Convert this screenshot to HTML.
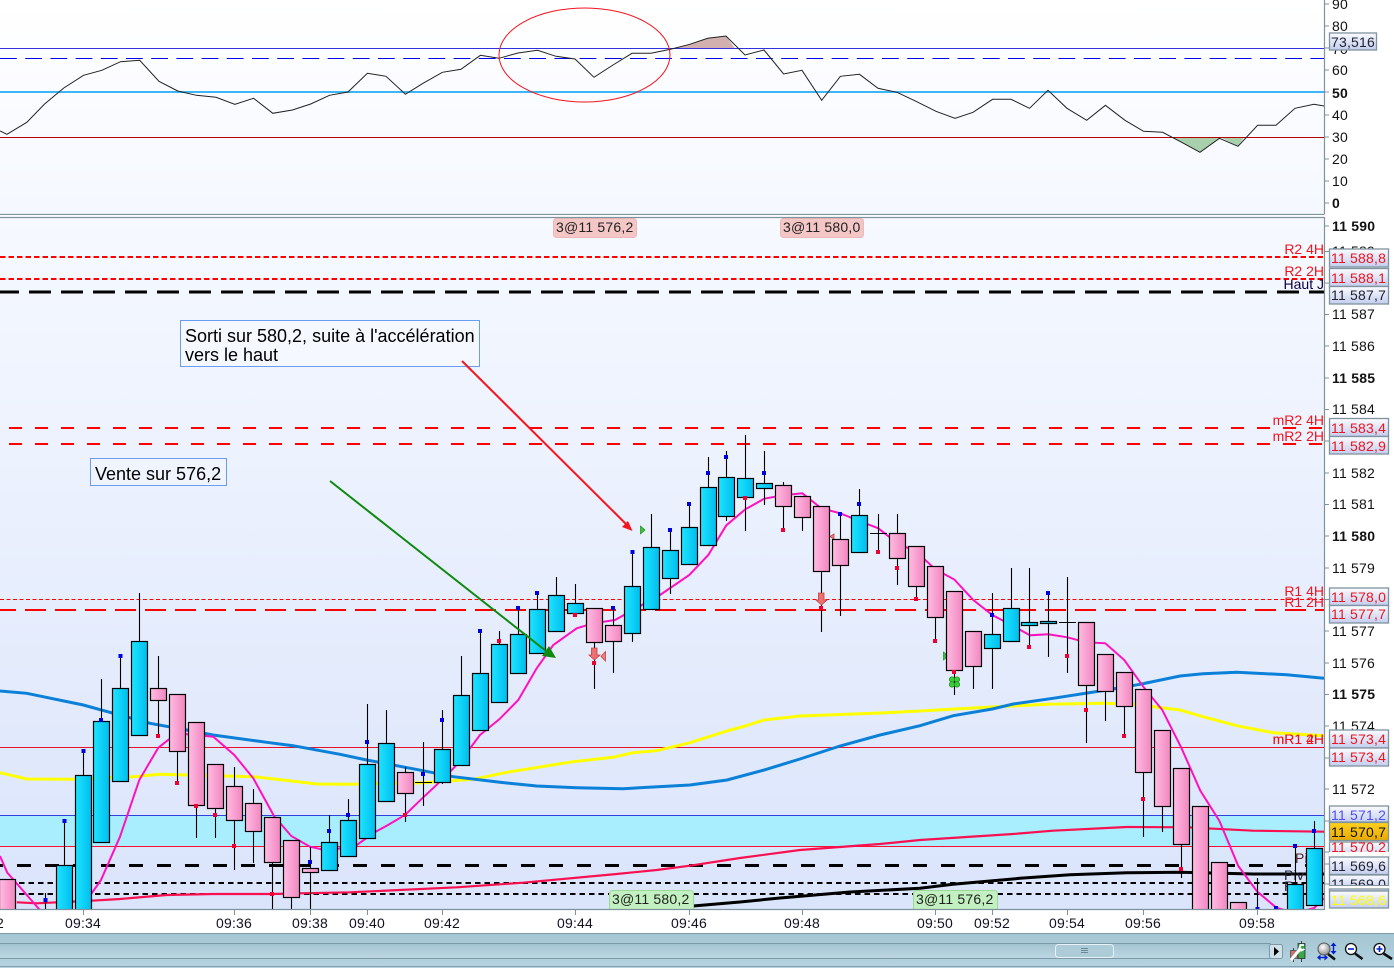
<!DOCTYPE html>
<html><head><meta charset="utf-8"><style>
html,body{margin:0;padding:0;background:#fff;width:1394px;height:968px;overflow:hidden}
svg{display:block;font-family:"Liberation Sans",sans-serif;font-size:14px;letter-spacing:.2px}
.b{fill:url(#gb);stroke:#000;stroke-width:1.2}
.p{fill:url(#gp);stroke:#000;stroke-width:1.2}
.vb{fill:url(#gv);stroke:#7f939f;stroke-width:1.3}
.m{fill:#f00}
.bd{fill:#0000dd}.rd{fill:#f00030}
.tl{fill:#111}
.r{fill:#f0141e;text-anchor:end;letter-spacing:0}
.ax{fill:#111}
.an{letter-spacing:0;font-size:18px;fill:#000}
</style></head><body>
<svg width="1394" height="968" viewBox="0 0 1394 968" xmlns="http://www.w3.org/2000/svg">
<defs>
<linearGradient id="g1" x1="0" y1="0" x2="0" y2="1"><stop offset="0" stop-color="#fff"/><stop offset="1" stop-color="#f5f8ff"/></linearGradient>
<linearGradient id="g2" x1="0" y1="0" x2="0" y2="1"><stop offset="0" stop-color="#f6f9ff"/><stop offset="1" stop-color="#dae4fb"/></linearGradient>
<linearGradient id="gb" x1="0" y1="0" x2="1" y2="0"><stop offset="0" stop-color="#1ee4ff"/><stop offset="1" stop-color="#00bdee"/></linearGradient>
<linearGradient id="gp" x1="0" y1="0" x2="1" y2="0"><stop offset="0" stop-color="#ffbce2"/><stop offset="1" stop-color="#f286c0"/></linearGradient>
<linearGradient id="gv" x1="0" y1="0" x2="0" y2="1"><stop offset="0" stop-color="#fbfcff"/><stop offset="1" stop-color="#c3cdee"/></linearGradient>
<linearGradient id="gy" x1="0" y1="0" x2="0" y2="1"><stop offset="0" stop-color="#ffd21e"/><stop offset="1" stop-color="#e8a800"/></linearGradient>
<linearGradient id="gt" x1="0" y1="0" x2="0" y2="1"><stop offset="0" stop-color="#a6c6d4"/><stop offset="1" stop-color="#b4d2df"/></linearGradient>
<linearGradient id="gs" x1="0" y1="0" x2="0" y2="1"><stop offset="0" stop-color="#a3c2d0"/><stop offset="1" stop-color="#bcd8e4"/></linearGradient>
<radialGradient id="gm" cx=".4" cy=".35" r=".7"><stop offset="0" stop-color="#fff"/><stop offset="1" stop-color="#8a8a8a"/></radialGradient>
<clipPath id="cm"><rect x="0" y="218" width="1324" height="691"/></clipPath>
</defs>

<!-- RSI panel -->
<rect x="0" y="0" width="1324" height="214" fill="url(#g1)"/>
<polygon points="670.5,48.5 689.7,44.3 707.7,38.3 726,36 735,48.5" fill="#d2b0b0"/>
<polygon points="1172,137.5 1181.7,142.3 1200,152.3 1219,138 1217,137.5" fill="#a8d0ac"/>
<polygon points="1221,137.5 1238,146.3 1244,137.5" fill="#a8d0ac"/>
<path d="M0 48.5H1324" stroke="#3030e0" stroke-width="1" fill="none"/>
<path d="M0 58.5H1324" stroke="#0000f0" stroke-width="1" stroke-dasharray="16.8 8.4" fill="none"/>
<path d="M0 92H1324" stroke="#3cb6f6" stroke-width="2" fill="none"/>
<path d="M0 137.5H1324" stroke="#b80000" stroke-width="1" fill="none"/>
<polyline fill="none" stroke="#222" stroke-width="1" points="0,131 7,134.3 26.8,122.3 44.6,104 63.8,88 83.5,75.3 101.8,70.3 120.5,61.7 139.7,60.3 159,81.3 177.7,91 196.4,95.3 216,97.3 234.8,104.3 253.6,98.3 272.8,113.3 292.4,110 310.7,104 329.5,95.3 348,92 367.4,73.3 386,76.3 405.4,94.3 423,83.3 442.4,72.3 461,69.3 480.4,55.3 499,58.3 518,53 537.5,50.3 556,56.3 575,59 594,77.3 613,65 632,53.3 651,53.3 670.5,49.3 689.7,44.3 707.7,38.3 726,36 745,55 764,50 783.6,74 802,70.3 821.7,100.3 840.4,76.3 859.5,74.3 878,88.3 897,92.3 916,101.3 936,111.3 955,118.3 973,112.3 992.6,99.3 1011,99.3 1029.5,108.3 1048,90.3 1067,108.3 1086.7,120.3 1105.4,105.3 1125,120.3 1143.5,131.3 1162.6,132.3 1181.7,142.3 1200,152.3 1219.4,138.3 1238,146.3 1257.6,125.3 1276,125.3 1295,108.3 1314,104.3 1324,106"/>
<ellipse cx="584.5" cy="55" rx="85.5" ry="47" fill="none" stroke="#f4141e" stroke-width="1"/>
<path d="M0 214.5H1324M1324.5 0V214.5" stroke="#7f939f" stroke-width="1.2" fill="none"/>
<path d="M1325 4h4M1325 26h4M1325 48h4M1325 70h4M1325 92h4M1325 115h4M1325 137h4M1325 159h4M1325 181h4M1325 203h4" stroke="#7f939f" fill="none"/>
<g class="ax">
<text x="1332" y="9">90</text><text x="1332" y="31">80</text><text x="1332" y="54">70</text><text x="1332" y="75">60</text><text x="1332" y="98" font-weight="bold">50</text><text x="1332" y="120">40</text><text x="1332" y="142">30</text><text x="1332" y="164">20</text><text x="1332" y="186">10</text><text x="1332" y="208" font-weight="bold">0</text>
</g>
<rect class="vb" x="1329.5" y="33" width="47" height="17"/><text x="1331" y="47" fill="#223">73,516</text>

<!-- Main panel -->
<rect x="0" y="217" width="1324" height="692" fill="url(#g2)"/>
<g clip-path="url(#cm)">
<rect x="0" y="815" width="1324" height="32" fill="#a8eeff"/>
<path d="M0 815.5H1324" stroke="#3040dd" fill="none"/>
<path d="M0 846.5H1324" stroke="#ff1030" fill="none"/>
<path d="M0 747.5H1324" stroke="#e8102c" fill="none"/>
<path d="M0 257H1324M0 279H1324" stroke="#f00" stroke-width="2" stroke-dasharray="5.5 3" fill="none"/>
<path d="M-3 292H1324" stroke="#000" stroke-width="3" stroke-dasharray="22 10" fill="none"/>
<path d="M-17 428H1324M-17 444H1324" stroke="#f00" stroke-width="2" stroke-dasharray="13 13" fill="none"/>
<path d="M0 599.5H1324" stroke="#f00" stroke-width="1" stroke-dasharray="4 2.5" fill="none"/>
<path d="M-5 610H1324" stroke="#f00" stroke-width="2" stroke-dasharray="21 9" fill="none"/>
<path d="M-11 865.5H1324" stroke="#000" stroke-width="3" stroke-dasharray="14 14" fill="none"/>
<path d="M0 883H1324M0 894H1324" stroke="#000" stroke-width="2" stroke-dasharray="5.5 4" fill="none"/>

<polyline fill="none" stroke="#ffff00" stroke-width="3" points="0,772.7 26.7,779 73,779.3 133,776.7 160,774.3 186.7,775 253.3,776.7 283,780 316.7,784 350,784.3 423,782.7 473,779.3 506.7,772.3 573,761.7 613,757.3 633,752.7 656.7,750.7 690,742.7 727,731 745,726 764,720 800,716 880,713 920,711 986.7,707.3 1046.7,704.3 1103,703.3 1133,704.3 1180,710 1203,716.7 1236.7,725.7 1273,732.7 1324,735.7"/>
<polyline fill="none" stroke="#0a80d8" stroke-width="3" points="0,691 26.7,693.3 83.3,705 150,723.3 186.7,730 213,735 266.7,742.3 293,745.7 340,754.3 366.7,760 423,770.7 453.3,776.7 500,782.3 536.7,786 576.7,787.7 623,788.7 690,785 727,780 764,770 800,759 840,746 880,735 920,725.7 953.3,715.7 992.3,709 1013.3,704 1053,698.3 1106.7,690 1140,684.3 1180,676 1203,673.7 1236.7,672.3 1286.7,674.7 1324,678.3"/>
<polyline fill="none" stroke="#f81050" stroke-width="2.2" points="16.7,902.3 36.7,903.3 91.7,900.7 120,899 166.7,895 213,894 271.7,894 300,893.3 350,892.3 456.7,887.3 523,882.7 616.7,874 656.7,870 690,865.7 740,858 800,850 880,844 920,840 1013,834 1053,830.7 1126.7,827 1186.7,827.3 1253,830.7 1324,831.7"/>
<polyline fill="none" stroke="#000" stroke-width="3" points="693,906 740,902 780,898 850,892 920,888.3 953,884.3 1020,878.3 1070,874.7 1126.7,872.7 1180,872.3 1253,874 1324,874"/>
<polyline fill="none" stroke="#ff10c0" stroke-width="2" points="0,856 7.3,872.7 20.7,888 39,909 60,925 80,910 91.7,893.3 101,880 120,836.7 139.3,780 158.3,747.7 176.7,733.3 213.3,736.7 234.3,755 253.3,778.3 274,816 291.3,836 310,846.7 328,850.7 356.7,845 375.7,831.7 386.7,825.7 405,815 423.3,797.3 440,781.7 455,766.7 470,748.3 480,735 499.3,719.3 518.3,700 536.7,668.3 553.3,645 576.7,628.3 593.3,623.3 615,620 633,610 660,595 689.3,575 708.3,555 726.3,525.3 745.3,509.3 764.3,498.7 783.3,495.3 802.3,493.3 821.3,508.3 840.3,513.3 859.3,521 878.3,528.3 897.3,543.3 916.3,551.7 935.3,569.3 954.3,579.5 973.3,600 992.3,615 1011.3,625 1030,635.3 1048.3,634.3 1067.3,637.3 1086.3,642.3 1105.3,643.3 1124.3,660 1143.3,686.7 1162.3,710 1181.3,747.7 1200.3,790.7 1219.3,820.7 1238.3,866 1257.3,891.7 1276.3,907.7 1295,913 1314.3,908 1324,898.3"/>

<!-- Text labels on lines -->
<text class="r" x="1324" y="254">R2 4H</text>
<text class="r" x="1324" y="276">R2 2H</text>
<text x="1324" y="289" text-anchor="end" fill="#100040" letter-spacing="0">Haut J</text>
<text class="r" x="1324" y="425">mR2 4H</text>
<text class="r" x="1324" y="441">mR2 2H</text>
<text class="r" x="1324" y="596">R1 4H</text>
<text class="r" x="1324" y="607">R1 2H</text>
<text class="r" x="1324" y="744">mR1 4H</text>
<text class="r" x="1324" y="744">mR1 2H</text>
<text x="1295" y="863" fill="#502020">Pi</text>
<text x="1284" y="880" fill="#223">Piv</text>
<text x="1284" y="891" fill="#223">R</text>

<!-- Wicks -->
<path fill="none" stroke="#000" stroke-width="1.1" d="M45.5 893V909M64.5 821V866M83.5 751V776M101.5 679V722M120.5 656V689M139.5 593V642M158.5 656V736M177.5 694V783M196.5 722V838M215.5 764V838M234.5 767V870M253.5 789V863M272.5 817V909M291.5 840V909M310.5 847V909M329.5 815V843M348.5 799V821M367.5 704V765M386.5 710V744M405.5 767V822M423.5 742V806M415 782.5H432M442.5 710V784M461.5 656V696M480.5 631V674M499.5 631V645M518.5 608V635M537.5 593V610M556.5 577V596M575.5 584V604M594.5 643V689M613.5 608V673M632.5 552V642M651.5 514V548M670.5 530V594M689.5 504V528M708.5 457V488M726.5 451V521M745.5 435V531M764.5 451V505M783.5 482V530M802.5 517V531M821.5 571V632M840.5 514V616M859.5 489V516M878.5 514V552M870 533.5H887M897.5 514V585M916.5 586V599M935.5 617V641M954.5 670V695M973.5 666V689M992.5 593V689M1011.5 568V609M1029.5 568V647M1048.5 593V657M1067.5 577V673M1059 622.5H1076M1086.5 685V743M1105.5 691V721M1124.5 706V736M1143.5 772V837M1162.5 806V832M1181.5 844V878M1257.5 878V909M1295.5 846V885M1314.5 821V849"/>

<!-- Markers -->
<g>
<polygon points="640.5,526 645,530 640.5,534" fill="#40c040" stroke="#1a901a" stroke-width=".7"/>
<polygon points="943.5,652 948,656 943.5,660" fill="#40c040" stroke="#1a901a" stroke-width=".7"/>
<polygon points="605.5,651.5 601,656.5 605.5,661" fill="#f08080" stroke="#c04040" stroke-width=".8"/>
<polygon points="591.5,648 597,648 597,655 600,655 594.5,660 589,655 591.5,655" fill="#ee7070" stroke="#c04040" stroke-width=".8"/>
<polygon points="818.5,593 824,593 824,600 827,600 821.5,605 816,600 818.5,600" fill="#ee7070" stroke="#c04040" stroke-width=".8"/>
<polygon points="834,534 830,536.5 834,539" fill="#f08080" stroke="#c04040" stroke-width=".8"/>
<g fill="#3ccc3c" stroke="#148a14" stroke-width=".7"><circle cx="952" cy="679.5" r="2.7"/><circle cx="957" cy="679.5" r="2.7"/><circle cx="952" cy="684.5" r="2.7"/><circle cx="957" cy="684.5" r="2.7"/></g>
</g>

<!-- Bodies -->
<rect class="p" x="-0.5" y="879.5" width="16" height="40"/>
<rect class="b" x="56.5" y="865.5" width="16" height="60"/>
<rect class="b" x="75.5" y="775.5" width="16" height="150"/>
<rect class="b" x="93.5" y="721.5" width="16" height="121"/>
<rect class="b" x="112.5" y="688.5" width="16" height="93"/>
<rect class="b" x="131.5" y="641.5" width="16" height="94"/>
<rect class="p" x="150.5" y="688.5" width="16" height="12"/>
<rect class="p" x="169.5" y="694.5" width="16" height="57"/>
<rect class="p" x="188.5" y="722.5" width="16" height="83"/>
<rect class="p" x="207.5" y="764.5" width="16" height="44"/>
<rect class="p" x="226.5" y="786.5" width="16" height="34"/>
<rect class="p" x="245.5" y="803.5" width="16" height="28"/>
<rect class="p" x="264.5" y="817.5" width="16" height="45"/>
<rect class="p" x="283.5" y="840.5" width="16" height="57"/>
<rect class="p" x="302.5" y="868.5" width="16" height="4"/>
<rect class="b" x="321.5" y="842.5" width="16" height="28"/>
<rect class="b" x="340.5" y="820.5" width="16" height="36"/>
<rect class="b" x="359.5" y="764.5" width="16" height="74"/>
<rect class="b" x="378.5" y="743.5" width="16" height="58"/>
<rect class="p" x="397.5" y="772.5" width="16" height="21"/>
<rect class="b" x="434.5" y="749.5" width="16" height="33"/>
<rect class="b" x="453.5" y="695.5" width="16" height="70"/>
<rect class="b" x="472.5" y="673.5" width="16" height="57"/>
<rect class="b" x="491.5" y="644.5" width="16" height="58"/>
<rect class="b" x="510.5" y="634.5" width="16" height="39"/>
<rect class="b" x="529.5" y="609.5" width="16" height="44"/>
<rect class="b" x="548.5" y="595.5" width="16" height="36"/>
<rect class="b" x="567.5" y="603.5" width="16" height="10"/>
<rect class="p" x="586.5" y="608.5" width="16" height="34"/>
<rect class="p" x="605.5" y="625.5" width="16" height="16"/>
<rect class="b" x="624.5" y="586.5" width="16" height="47"/>
<rect class="b" x="643.5" y="547.5" width="16" height="62"/>
<rect class="b" x="662.5" y="550.5" width="16" height="28"/>
<rect class="b" x="681.5" y="527.5" width="16" height="37"/>
<rect class="b" x="700.5" y="487.5" width="16" height="58"/>
<rect class="b" x="718.5" y="477.5" width="16" height="39"/>
<rect class="b" x="737.5" y="478.5" width="16" height="19"/>
<rect class="b" x="756.5" y="483.5" width="16" height="5"/>
<rect class="p" x="775.5" y="485.5" width="16" height="21"/>
<rect class="p" x="794.5" y="496.5" width="16" height="21"/>
<rect class="p" x="813.5" y="506.5" width="16" height="65"/>
<rect class="p" x="832.5" y="539.5" width="16" height="26"/>
<rect class="b" x="851.5" y="515.5" width="16" height="37"/>
<rect class="p" x="889.5" y="533.5" width="16" height="25"/>
<rect class="p" x="908.5" y="546.5" width="16" height="40"/>
<rect class="p" x="927.5" y="566.5" width="16" height="51"/>
<rect class="p" x="946.5" y="591.5" width="16" height="79"/>
<rect class="p" x="965.5" y="631.5" width="16" height="35"/>
<rect class="b" x="984.5" y="634.5" width="16" height="14"/>
<rect class="b" x="1003.5" y="608.5" width="16" height="33"/>
<rect class="b" x="1021.5" y="622.5" width="16" height="3"/>
<rect class="b" x="1040.5" y="621.5" width="16" height="2"/>
<rect class="p" x="1078.5" y="622.5" width="16" height="63"/>
<rect class="p" x="1097.5" y="654.5" width="16" height="37"/>
<rect class="p" x="1116.5" y="672.5" width="16" height="34"/>
<rect class="p" x="1135.5" y="689.5" width="16" height="83"/>
<rect class="p" x="1154.5" y="730.5" width="16" height="76"/>
<rect class="p" x="1173.5" y="768.5" width="16" height="76"/>
<rect class="p" x="1192.5" y="806.5" width="16" height="120"/>
<rect class="p" x="1211.5" y="862.5" width="16" height="60"/>
<rect class="p" x="1230.5" y="902.5" width="16" height="30"/>
<rect class="b" x="1287.5" y="884.5" width="16" height="40"/>
<rect class="b" x="1306.5" y="848.5" width="16" height="57"/>

<!-- Dots -->
<g class="bd">
<rect x="43.5" y="898" width="4" height="4"/><rect x="62.5" y="819" width="4" height="4"/><rect x="81.5" y="749" width="4" height="4"/><rect x="99" y="718" width="4" height="4"/><rect x="118.5" y="654" width="4" height="4"/><rect x="308" y="860" width="4" height="4"/><rect x="327" y="829" width="4" height="4"/><rect x="346" y="813" width="4" height="4"/><rect x="365" y="740" width="4" height="4"/><rect x="421" y="772" width="4" height="4"/><rect x="440" y="718" width="4" height="4"/><rect x="478" y="629" width="4" height="4"/><rect x="516" y="606" width="4" height="4"/><rect x="535" y="591" width="4" height="4"/><rect x="611" y="606" width="4" height="4"/><rect x="630.5" y="550" width="4" height="4"/><rect x="668" y="528" width="4" height="4"/><rect x="687" y="502" width="4" height="4"/><rect x="706" y="471" width="4" height="4"/><rect x="724" y="455" width="4" height="4"/><rect x="762" y="471" width="4" height="4"/><rect x="838" y="512" width="4" height="4"/><rect x="857" y="502" width="4" height="4"/><rect x="990" y="613" width="4" height="4"/><rect x="1046" y="591" width="4" height="4"/><rect x="1255.5" y="907" width="4" height="4"/><rect x="1274" y="906" width="4" height="4"/><rect x="1293" y="844" width="4" height="4"/><rect x="1312" y="829" width="4" height="4"/>
</g>
<g class="rd">
<rect x="156" y="734" width="4" height="4"/><rect x="175" y="781" width="4" height="4"/><rect x="194" y="804" width="4" height="4"/><rect x="213" y="813" width="4" height="4"/><rect x="232" y="844" width="4" height="4"/><rect x="270" y="892" width="4" height="4"/><rect x="403" y="813" width="4" height="4"/><rect x="497" y="639" width="4" height="4"/><rect x="573" y="613" width="4" height="4"/><rect x="592" y="661" width="4" height="4"/><rect x="743" y="496" width="4" height="4"/><rect x="781" y="528" width="4" height="4"/><rect x="819" y="606" width="4" height="4"/><rect x="876" y="550" width="4" height="4"/><rect x="895" y="566" width="4" height="4"/><rect x="914" y="597" width="4" height="4"/><rect x="933" y="639" width="4" height="4"/><rect x="952" y="670" width="4" height="4"/><rect x="1027" y="645" width="4" height="4"/><rect x="1065" y="654" width="4" height="4"/><rect x="1084" y="708" width="4" height="4"/><rect x="1122" y="734" width="4" height="4"/><rect x="1141" y="797" width="4" height="4"/><rect x="1179" y="867" width="4" height="4"/>
</g>

<!-- Annotations -->
<rect x="180.5" y="320.5" width="299" height="46" fill="#f5f8ff" stroke="#6a9cf0"/>
<text class="an" x="185" y="342">Sorti sur 580,2, suite à l'accélération</text>
<text class="an" x="185" y="361">vers le haut</text>
<rect x="90.5" y="458.5" width="136" height="27" fill="#f0f4ff" stroke="#6a9cf0"/>
<text class="an" x="95" y="480">Vente sur 576,2</text>
<path d="M462 361L626 524" stroke="#f8141e" stroke-width="2" fill="none"/>
<polygon points="632.5,531 622,527 628,521" fill="#f8141e"/>
<path d="M330 481L546 651" stroke="#0e8a10" stroke-width="2" fill="none"/>
<polygon points="556,658 542,656 549,646" fill="#0e8a10"/>

<!-- Order tags -->
<rect x="553.5" y="218.5" width="83" height="19" rx="3" fill="#f4c6c6" stroke="#ecb8b8"/>
<text x="556" y="232" fill="#222">3@11 576,2</text>
<rect x="780.5" y="218.5" width="83" height="19" rx="3" fill="#f4c6c6" stroke="#ecb8b8"/>
<text x="783" y="232" fill="#222">3@11 580,0</text>
<rect x="609.5" y="890.5" width="84" height="22" rx="3" fill="#c2f0c0" stroke="#9cd89a"/>
<text x="612" y="904" fill="#222">3@11 580,2</text>
<rect x="913.5" y="890.5" width="84" height="22" rx="3" fill="#c2f0c0" stroke="#9cd89a"/>
<text x="916" y="904" fill="#222">3@11 576,2</text>
</g>

<!-- Main axis -->
<rect x="1325" y="215" width="69" height="694" fill="#fff"/>
<rect x="0" y="215" width="1324" height="2" fill="#fff"/>
<path d="M0 217.5H1324M1324.5 217V909.5M0 909.5H1325" stroke="#7f939f" stroke-width="1.2" fill="none"/>
<path d="M1325 226h4M1325 251.5h4M1325 283h4M1325 314.5h4M1325 346h4M1325 378h4M1325 409.5h4M1325 441h4M1325 473h4M1325 504.5h4M1325 536h4M1325 568h4M1325 599.5h4M1325 631h4M1325 663h4M1325 694.5h4M1325 726h4M1325 758h4M1325 789h4M1325 821h4M1325 852h4M1325 864h4M1325 884h4" stroke="#7f939f" fill="none"/>
<g class="ax">
<text x="1332" y="231" font-weight="bold">11 590</text>
<text x="1332" y="256">11 589</text>
<text x="1332" y="319">11 587</text>
<text x="1332" y="351">11 586</text>
<text x="1332" y="383" font-weight="bold">11 585</text>
<text x="1332" y="414">11 584</text>
<text x="1332" y="478">11 582</text>
<text x="1332" y="509">11 581</text>
<text x="1332" y="541" font-weight="bold">11 580</text>
<text x="1332" y="573">11 579</text>
<text x="1332" y="636">11 577</text>
<text x="1332" y="668">11 576</text>
<text x="1332" y="699" font-weight="bold">11 575</text>
<text x="1332" y="731">11 574</text>
<text x="1332" y="794">11 572</text>
</g>
<g>
<rect class="vb" x="1329.5" y="249" width="59" height="18"/><text x="1331" y="263" fill="#f0141e">11 588,8</text>
<rect class="vb" x="1329.5" y="268.5" width="59" height="18"/><text x="1331" y="283" fill="#f0141e">11 588,1</text>
<rect class="vb" x="1329.5" y="286.5" width="59" height="17.5"/><text x="1331" y="300" fill="#223">11 587,7</text>
<rect class="vb" x="1329.5" y="418.5" width="59" height="18"/><text x="1331" y="433" fill="#f0141e">11 583,4</text>
<rect class="vb" x="1329.5" y="436.5" width="59" height="17.5"/><text x="1331" y="451" fill="#f0141e">11 582,9</text>
<rect class="vb" x="1329.5" y="588" width="59" height="17.5"/><text x="1331" y="602" fill="#f0141e">11 578,0</text>
<rect class="vb" x="1329.5" y="605.5" width="59" height="17.5"/><text x="1331" y="619" fill="#f0141e">11 577,7</text>
<rect class="vb" x="1329.5" y="730" width="59" height="18"/><text x="1331" y="744" fill="#f0141e">11 573,4</text>
<rect class="vb" x="1329.5" y="748" width="59" height="18"/><text x="1331" y="762" fill="#f0141e">11 573,4</text>
<rect class="vb" x="1329.5" y="806" width="59" height="16"/><text x="1331" y="820" fill="#5050f0">11 571,2</text>
<rect x="1329.5" y="842" width="59" height="16" class="vb"/><text x="1331" y="852" fill="#f0141e">11 570,2</text>
<rect x="1329" y="852" width="60" height="5" fill="#fff"/>
<rect x="1329.5" y="822.5" width="59" height="18" fill="url(#gy)" stroke="#7f939f" stroke-width="1.3"/><text x="1331" y="837" fill="#111">11 570,7</text>
<rect class="vb" x="1329.5" y="857" width="59" height="17.5"/><text x="1331" y="871" fill="#223">11 569,6</text>
<rect class="vb" x="1329.5" y="875" width="59" height="14"/><text x="1331" y="889" fill="#223">11 569,0</text>
<rect x="1329" y="885" width="60" height="1" fill="#7f939f"/>
<rect x="1329" y="886" width="60" height="3" fill="#fff"/>
<rect class="vb" x="1329.5" y="889" width="59" height="2"/>
<rect class="vb" x="1329.5" y="891" width="59" height="17"/><text x="1331" y="905" fill="#ffff00">11 568,6</text>
</g>

<!-- Time axis -->
<path d="M83.5 910v5M234.5 910v5M310.5 910v5M367.5 910v5M442.5 910v5M575.5 910v5M689.5 910v5M802.5 910v5M935.5 910v5M992.5 910v5M1067.5 910v5M1143.5 910v5M1257.5 910v5" stroke="#7f939f" fill="none"/>
<g fill="#112" text-anchor="middle">
<text x="0" y="928">2</text>
<text x="83" y="928">09:34</text><text x="234" y="928">09:36</text><text x="310" y="928">09:38</text><text x="367" y="928">09:40</text><text x="442" y="928">09:42</text><text x="575" y="928">09:44</text><text x="689" y="928">09:46</text><text x="802" y="928">09:48</text><text x="935" y="928">09:50</text><text x="992" y="928">09:52</text><text x="1067" y="928">09:54</text><text x="1143" y="928">09:56</text><text x="1257" y="928">09:58</text>
</g>

<!-- Toolbar -->
<rect x="0" y="934" width="1394" height="34" fill="url(#gt)"/>
<path d="M0 933.5H1394" stroke="#7f98a5" fill="none"/>
<path d="M0 966.5H1394" stroke="#86a0ad" fill="none"/>
<rect x="-2" y="943.5" width="1272" height="15" fill="url(#gs)" stroke="#7f98a5"/>
<rect x="1055.5" y="944.5" width="58" height="13" rx="3" fill="#aecbd8" stroke="#e6f2f7"/>
<path d="M1081 948.5h7M1081 950.5h7M1081 952.5h7" stroke="#6f8a97" fill="none"/>
<rect x="1269.5" y="944.5" width="13" height="14" rx="2" fill="#cfe2ea" stroke="#7f98a5"/>
<polygon points="1274,947 1279,951.5 1274,956" fill="#000"/>
<!-- settings icon -->
<path d="M1301.5 941V962M1293.5 948V962" stroke="#444" fill="none"/>
<rect x="1298" y="943.5" width="7" height="15" fill="#3aa84a" stroke="#222" stroke-width=".7"/>
<rect x="1290.5" y="950.5" width="7" height="8" fill="#c87070" stroke="#444" stroke-width=".7"/>
<path d="M1291 960L1301 948" stroke="#fff" stroke-width="3" fill="none"/>
<path d="M1299 949l1.5-4h3.5M1300.5 951l4-2" stroke="#fff" stroke-width="1.8" fill="none"/>
<!-- zoom fit -->
<path d="M1328 954L1335 959.5" stroke="#111" stroke-width="2.6" fill="none"/>
<circle cx="1324" cy="949" r="6" fill="url(#gm)" stroke="#555"/>
<path d="M1333.5 945V952" stroke="#0020d0" stroke-width="1.4" fill="none"/>
<polygon points="1333.5,942.5 1336.5,946 1330.5,946" fill="#0020d0"/>
<polygon points="1333.5,954.5 1336.5,951 1330.5,951" fill="#0020d0"/>
<path d="M1319 957.5H1326" stroke="#0020d0" stroke-width="1.4" fill="none"/>
<polygon points="1317,957.5 1320.5,954.5 1320.5,960.5" fill="#0020d0"/>
<polygon points="1328,957.5 1324.5,954.5 1324.5,960.5" fill="#0020d0"/>
<!-- zoom out -->
<path d="M1355 953.5L1362.5 959" stroke="#111" stroke-width="2.6" fill="none"/>
<circle cx="1351" cy="949" r="5.5" fill="#fff" stroke="#111" stroke-width="1.3"/>
<path d="M1348 949h6" stroke="#0020d0" stroke-width="1.6" fill="none"/>
<!-- zoom in -->
<path d="M1383.5 953.5L1392 959" stroke="#111" stroke-width="2.6" fill="none"/>
<circle cx="1379.5" cy="949" r="5.5" fill="#fff" stroke="#111" stroke-width="1.3"/>
<path d="M1376.5 949h6M1379.5 946v6" stroke="#0020d0" stroke-width="1.6" fill="none"/>
</svg>
</body></html>
